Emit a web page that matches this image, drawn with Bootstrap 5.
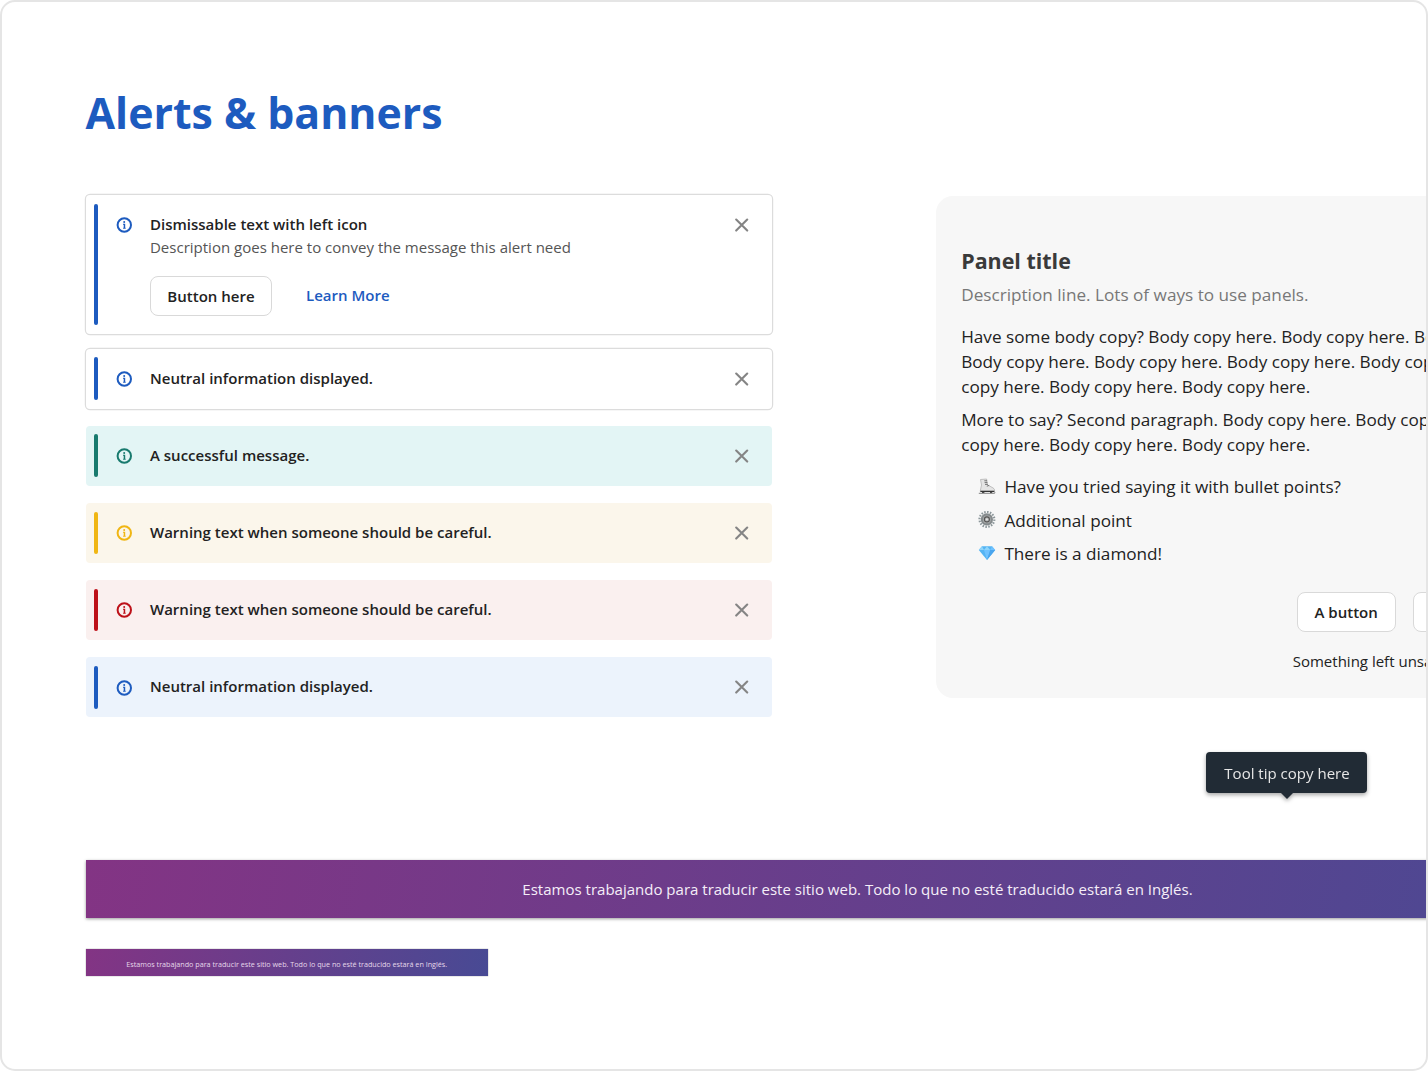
<!DOCTYPE html>
<html lang="en">
<head>
<meta charset="utf-8">
<meta name="viewport" content="width=device-width, initial-scale=1">
<title>Alerts &amp; banners</title>
<link href="https://cdn.jsdelivr.net/npm/bootstrap@5.3.0/dist/css/bootstrap.min.css" rel="stylesheet">
<style>
body{font-family:"Open Sans","Noto Sans",sans-serif;background:#fff;color:#222;height:1071px;overflow:hidden}
.frame{height:1071px;border:2px solid #e5e5e5;border-radius:15px;background:#fff;padding:0 0 0 83.5px}
.page-title{font-size:42.85px;line-height:58px;font-weight:700;color:#1d5bbf;padding-top:82px;margin:0 0 53px}
.upper{height:665.4px;gap:164.1px}
.alerts{width:686px;gap:17.2px}
.note{--tone:#1d5bbf;background:var(--fill,#fff);border:0;border-radius:4px;margin:0;padding:8.7px;min-height:60px;font-size:15.02px;line-height:23.4px;color:#222}
.note-line{box-shadow:0 0 0 1.2px #dcdcdc}
.note-tall{height:139px;margin-bottom:-2.6px}
.tone-ok{--tone:#187a6e;--fill:#e3f5f5}
.tone-warn{--tone:#f0b614;--fill:#fbf6eb}
.tone-bad{--tone:#bd1119;--fill:#faf0ef}
.tone-info{--tone:#1d5bbf;--fill:#ecf3fc}
.note-bar{width:4.3px;border-radius:2px;background:var(--tone);margin-right:17.7px}
.note-icon{width:16px;height:16px;color:var(--tone);margin:13.6px 17.8px 0 0}
.note-close{width:14px;height:14px;margin:14.4px 14.1px 0 0;padding:0;border:0;background:none;line-height:0;color:#858585}
.note-body{padding-top:9.25px}
.note-head{font-weight:600;color:#222}
.note-desc{color:#555}
.btn-plain{font-size:15.02px;font-weight:600;line-height:22px;color:#222;background:#fff;border:1.2px solid #d9d9d9;border-radius:8px;height:40.5px;padding:8px 16.4px}
.note-actions{margin-top:16.1px;gap:34px}
.note-link{font-weight:600;color:#1d5bbf;text-decoration:none}
.panel{width:994px;height:502px;border-radius:17px;background:#f7f7f7;padding:50px 0 0 25.6px;font-size:17.17px;line-height:25px;white-space:nowrap;margin-top:.5px}
.panel h2{font-size:21.45px;line-height:30px;font-weight:700;color:#3a3a3a;margin:0}
.panel p{margin-bottom:8.5px}
.panel .panel-desc{color:#777;margin:6.4px 0 17px}
.panel ul{margin:17px 0 0;padding-left:16.8px}
.panel li{gap:8.4px;margin-bottom:8.5px}
.panel-actions{margin:25.2px 0 0 335.5px;gap:17.4px}
.panel-actions .btn-plain{padding:8px 16.8px}
.panel-foot{font-size:15.02px;margin:16.8px 0 0 331.5px}
.tip{width:161px;height:41px;margin:54.5px 0 0 270.9px;background:#212b35;color:#e6e6e6;border-radius:4px;font-size:15.02px;line-height:42px;filter:drop-shadow(0 2px 2px rgba(0,0,0,.35))}
.tip::after{content:"";position:absolute;left:50%;top:100%;margin-left:-6px;border:6px solid transparent;border-top-color:#212b35;border-bottom:0}
.strip{background:linear-gradient(100deg,#833484,#484a94);color:#f5eef8;white-space:nowrap}
.strip-lg{width:1544px;height:57.5px;font-size:15.02px;box-shadow:0 1px 3px rgba(0,0,0,.4)}
.strip-sm{width:402.5px;height:27px;font-size:7.2px;margin-top:31.5px;padding-top:3px;box-shadow:0 0 1px rgba(0,0,0,.5);color:#e6d8ea}
</style>
</head>
<body>
<svg class="d-none" xmlns="http://www.w3.org/2000/svg">
<symbol id="info" viewBox="0 0 16 16"><circle cx="8.3" cy="8" r="6.7" fill="none" stroke="currentColor" stroke-width="2"/><circle cx="8.2" cy="4.9" r="1" fill="currentColor"/><path d="M7 6.8h2.2v4h.5v1H7.1v-1h.6v-3H7z" fill="currentColor"/></symbol>
<symbol id="close" viewBox="0 0 14 14"><path d="M1.2 1.6 12.2 12.6M12.2 1.6 1.2 12.6" stroke="currentColor" stroke-width="2.1" stroke-linecap="round" fill="none"/></symbol>
</svg>
<main class="frame overflow-hidden">
<h1 class="page-title">Alerts &amp; banners</h1>
<div class="upper d-flex align-items-start">
<section class="alerts d-flex flex-column flex-shrink-0">
<div class="alert note note-line note-tall d-flex" role="alert"><span class="note-bar"></span><svg class="note-icon"><use href="#info"/></svg><div class="note-body flex-grow-1"><div class="note-head">Dismissable text with left icon</div><div class="note-desc">Description goes here to convey the message this alert need</div><div class="note-actions d-flex align-items-center"><button class="btn btn-plain">Button here</button><a class="note-link" href="#">Learn More</a></div></div><button class="note-close" aria-label="Close"><svg width="14" height="14"><use href="#close"/></svg></button></div>
<div class="alert note note-line d-flex" role="alert"><span class="note-bar"></span><svg class="note-icon"><use href="#info"/></svg><div class="note-body note-head flex-grow-1">Neutral information displayed.</div><button class="note-close" aria-label="Close"><svg width="14" height="14"><use href="#close"/></svg></button></div>
<div class="alert note tone-ok d-flex" role="alert"><span class="note-bar"></span><svg class="note-icon"><use href="#info"/></svg><div class="note-body note-head flex-grow-1">A successful message.</div><button class="note-close" aria-label="Close"><svg width="14" height="14"><use href="#close"/></svg></button></div>
<div class="alert note tone-warn d-flex" role="alert"><span class="note-bar"></span><svg class="note-icon"><use href="#info"/></svg><div class="note-body note-head flex-grow-1">Warning text when someone should be careful.</div><button class="note-close" aria-label="Close"><svg width="14" height="14"><use href="#close"/></svg></button></div>
<div class="alert note tone-bad d-flex" role="alert"><span class="note-bar"></span><svg class="note-icon"><use href="#info"/></svg><div class="note-body note-head flex-grow-1">Warning text when someone should be careful.</div><button class="note-close" aria-label="Close"><svg width="14" height="14"><use href="#close"/></svg></button></div>
<div class="alert note tone-info d-flex" role="alert"><span class="note-bar"></span><svg class="note-icon"><use href="#info"/></svg><div class="note-body note-head flex-grow-1">Neutral information displayed.</div><button class="note-close" aria-label="Close"><svg width="14" height="14"><use href="#close"/></svg></button></div>
</section>
<section class="flex-shrink-0">
<div class="panel">
<h2>Panel title</h2>
<p class="panel-desc">Description line. Lots of ways to use panels.</p>
<p>Have some body copy? Body copy here. Body copy here. Body copy here.<br>Body copy here. Body copy here. Body copy here. Body copy here. Body<br>copy here. Body copy here. Body copy here.</p>
<p>More to say? Second paragraph. Body copy here. Body copy here. Body<br>copy here. Body copy here. Body copy here.</p>
<ul class="list-unstyled">
<li class="d-flex align-items-center"><svg width="18" height="18" viewBox="0 0 18 18"><path d="M2.5 1.5 8.6 1l.8 5.8 5.6 3.1c1.6.9 1.8 2.3 1.4 3.4H2.2L3.5 7z" fill="#e4e4e4" stroke="#aaa" stroke-width=".7"/><path d="M6.3 2.8h2.8M6.6 4.6h2.8M7 6.4h2.8M8.8 8.2l2.4-.8" stroke="#666" stroke-width=".9"/><path d="M2.4 12.7h14v1.4h-14zM4 14h2.4v1.3H4zM12 14h2.2v1.3H12z" fill="#333"/><path d="M.8 15.4h15.4l1-1.2" stroke="#999" stroke-width="1.1" fill="none"/></svg>Have you tried saying it with bullet points?</li>
<li class="d-flex align-items-center"><svg width="18" height="18" viewBox="0 0 18 18"><circle cx="8.9" cy="8.4" r="7.4" fill="none" stroke="#8b969a" stroke-width="2.2" stroke-dasharray="1.5 1.4"/><circle cx="8.9" cy="8.4" r="5" fill="#a9abab" stroke="#858b8d" stroke-width="2.2"/><circle cx="8.9" cy="8.4" r="2.5" fill="#b9bbbb" stroke="#555" stroke-width="1.1"/><circle cx="8.9" cy="8.4" r=".8" fill="#eee"/></svg>Additional point</li>
<li class="d-flex align-items-center"><svg width="18" height="18" viewBox="0 0 18 18"><path d="M4 1.2h10l3.2 3.9L9 15 .8 5.1z" fill="#55b4f3"/><path d="M4 1.2 6 5.1H.8zM9 1.2l3.2 3.9H6z" fill="#8fd5fb"/><path d="m14 1.2-1.8 3.9h5zM6 5.1h6.2L9 15z" fill="#70c2ff"/><path d="m12.2 5.1h5L9 15z" fill="#4aa5ee"/></svg>There is a diamond!</li>
</ul>
<div class="panel-actions d-flex"><button class="btn btn-plain">A button</button><button class="btn btn-plain">A button</button></div>
<div class="panel-foot">Something left unsaid? Say it here.</div>
</div>
<div class="tip position-relative text-center" role="tooltip">Tool tip copy here</div>
</section>
</div>
<div class="strip strip-lg d-flex align-items-center justify-content-center">Estamos trabajando para traducir este sitio web. Todo lo que no esté traducido estará en Inglés.</div>
<div class="strip strip-sm d-flex align-items-center justify-content-center">Estamos trabajando para traducir este sitio web. Todo lo que no esté traducido estará en Inglés.</div>
</main>
<script src="https://cdn.jsdelivr.net/npm/bootstrap@5.3.0/dist/js/bootstrap.bundle.min.js"></script>
</body>
</html>
